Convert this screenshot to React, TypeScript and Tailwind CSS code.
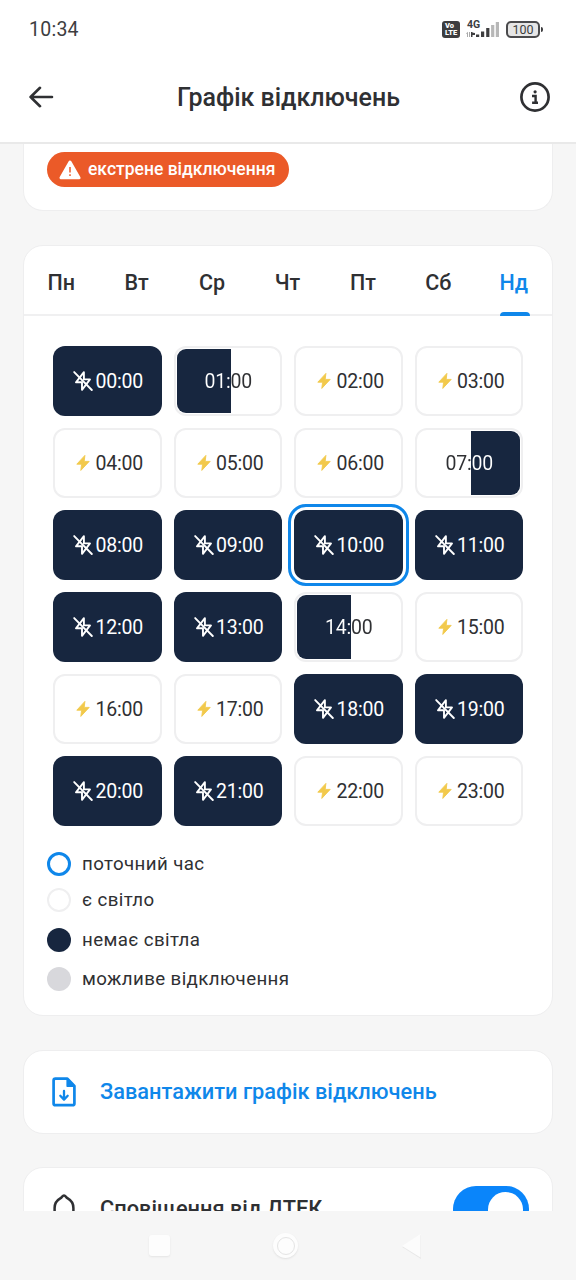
import React from "react";

type Kind = "on" | "off" | "offFirst" | "offSecond";

const KINDS: Kind[] = [
  "off", "offFirst", "on", "on",
  "on", "on", "on", "offSecond",
  "off", "off", "off", "off",
  "off", "off", "offFirst", "on",
  "on", "on", "off", "off",
  "off", "off", "on", "on",
];

const CURRENT_HOUR = 10;
const DAYS = ["Пн", "Вт", "Ср", "Чт", "Пт", "Сб", "Нд"];

function BoltIcon() {
  return (
    <svg viewBox="0 0 14 18" className="mr-[5px] h-[18px] w-[14px] shrink-0">
      <path d="M8.9 1.4 .8 10.2h4.8L4.8 16.4 13.2 7.4H8.2Z" fill="#f2c94c" stroke="#f2c94c" strokeWidth=".9" strokeLinejoin="round" />
    </svg>
  );
}

function BoltOffIcon() {
  return (
    <svg viewBox="0 0 20 20" className="mr-[2px] h-5 w-5 shrink-0" fill="none" stroke="#fff" strokeWidth="1.9" strokeLinejoin="round" strokeLinecap="round">
      <path d="M10.9 1.2 3 11.3h6L9 18.8 17 8.4h-6.1Z" />
      <path d="M1.2 1.1 18.8 19" />
    </svg>
  );
}

function Cell({ hour, kind }: { hour: number; kind: Kind }) {
  const label = `${String(hour).padStart(2, "0")}:00`;
  const text = "pt-px text-[19.5px] leading-[24px] tracking-[-0.2px]";
  if (kind === "off") {
    return (
      <div className={`flex h-[70px] items-center justify-center rounded-[12px] bg-[#17263f] pl-[2px] text-white ${hour === CURRENT_HOUR ? "outline-[3px] outline-offset-[3px] outline-[#0f87ea]" : ""}`}>
        <BoltOffIcon />
        <span className={text}>{label}</span>
      </div>
    );
  }
  if (kind === "on") {
    return (
      <div className="flex h-[70px] items-center justify-center rounded-[12px] border-2 border-[#efeff0] pl-[5px] text-[#2f3033]">
        <BoltIcon />
        <span className={text}>{label}</span>
      </div>
    );
  }
  const first = kind === "offFirst";
  return (
    <div className="grid h-[70px] rounded-[12px] border-2 border-[#efeff0]">
      <div
        className={
          first
            ? "col-start-1 row-start-1 mt-px mb-px ml-px w-[54px] rounded-l-[9px] bg-[#17263f]"
            : "col-start-1 row-start-1 mt-px mr-px mb-px w-[49px] justify-self-end rounded-r-[9px] bg-[#17263f]"
        }
      />
      <span
        className={`col-start-1 row-start-1 self-center bg-clip-text pl-px text-center text-transparent ${text} ${
          first
            ? "bg-[linear-gradient(90deg,#fff_55px,#2f3033_55px)]"
            : "bg-[linear-gradient(90deg,#2f3033_54.5px,#fff_54.5px)]"
        }`}
      >
        {label}
      </span>
    </div>
  );
}

function StatusBar() {
  return (
    <div className="flex h-[52px] items-center pt-[6px] pr-[33px] pl-[29px] text-[#3d3d3f]">
      <span className="pt-[2px] text-[19.5px] tracking-[0.25px]">10:34</span>
      <div className="ml-auto flex items-center">
        <div className="flex h-[17px] w-[18px] flex-col items-center justify-center rounded-[3px] bg-[#3d3d3f] text-[7.5px] leading-[7px] font-black text-white">
          <span className="self-start pl-[3px]">Vo</span>
          <span>LTE</span>
        </div>
        <div className="ml-[6px] flex h-[20px] w-[33px] flex-col">
          <span className="ml-[1px] h-[8px] text-[10.5px] leading-[11px] font-bold">4G</span>
          <svg viewBox="0 0 33 16" className="-mt-[6px] h-4 w-[33px] shrink-0">
            <path d="M0 12.5 2 10.8V16H1V13ZM3 11h1v5H3Z" fill="#aaa" />
            <path d="M5 11h1.5v5H5ZM6 11.5 9 12v2H6Z" fill="#3d3d3f" />
            <path d="M10 13.5h3.2V16H10ZM15 10.5h3.2V16H15ZM20.2 7h3.2v9h-3.2Z" fill="#3d3d3f" />
            <path d="M25.1 4h3.2v12h-3.2ZM29.8 1H33v15h-3.2Z" fill="#b7b7b7" />
          </svg>
        </div>
        <div className="ml-[7px] flex h-[17px] w-[34px] items-center justify-center rounded-[5px] border-2 border-[#4a4a4c] bg-[#e6e6e6] pt-px text-[12.5px] leading-[12px]">
          100
        </div>
        <div className="ml-px h-[5px] w-[2px] rounded-r bg-[#3d3d3f]" />
      </div>
    </div>
  );
}

function Header() {
  return (
    <header className="h-[144px] shrink-0 border-b-2 border-[#e9e9e9] bg-white">
      <StatusBar />
      <div className="flex h-[90px] items-center justify-between pr-[25px] pl-[28px]">
        <svg viewBox="0 0 27 22" className="h-[22px] w-[27px]" fill="none" stroke="#2f3033" strokeWidth="2.6" strokeLinecap="round" strokeLinejoin="round">
          <path d="M24 11H2.6M12 1.8 2.6 11 12 20.2" />
        </svg>
        <h1 className="pt-[2px] pl-[3px] text-[25px] leading-8 font-medium tracking-[-0.02px] whitespace-nowrap text-[#2f3033]">Графік відключень</h1>
        <svg viewBox="0 0 32 32" className="h-8 w-8" fill="none" stroke="#2f3033" strokeWidth="2.7">
          <circle cx="16" cy="16" r="13.6" />
          <path d="M13 15h3.6v7M13.1 21.8h5.9" strokeWidth="2.4" />
          <circle cx="16.1" cy="10.8" r="1.6" fill="#2f3033" stroke="none" />
        </svg>
      </div>
    </header>
  );
}

const card = "border border-[#eeeeef] bg-white";

export default function App() {
  return (
    <div className="flex h-[1280px] w-[576px] flex-col overflow-hidden bg-[#f6f6f6] font-[Roboto,sans-serif] text-[#2f3033]">
      <Header />
      <main className="min-h-0 flex-1 overflow-hidden px-[23px]">
        <section className={`h-[67px] rounded-b-[20px] px-[23px] pt-[8px] ${card} border-t-0`}>
          <div className="flex h-[35px] w-[242px] items-center rounded-full bg-[#eb5a28] pl-[12px] text-white">
            <svg viewBox="0 0 22 20" className="mr-[7px] h-[20px] w-[22px] shrink-0">
              <path d="M11 2 20 17.8H2Z" fill="#fff" stroke="#fff" strokeWidth="3" strokeLinejoin="round" />
              <path d="M11 7v5.5M11 14.2v1.8" stroke="#eb5a28" strokeWidth="1.5" />
            </svg>
            <span className="text-[17.5px] font-medium whitespace-nowrap">екстрене відключення</span>
          </div>
        </section>

        <section className={`mt-[34px] h-[771px] rounded-[20px] ${card}`}>
          <div className="grid h-[70px] grid-cols-7 border-b-2 border-[#f0f0f1]">
            {DAYS.map((d) => (
              <div key={d} className={`flex flex-col items-center pt-[23px] text-[21.5px] leading-[28px] font-medium ${d === "Нд" ? "text-[#0f87ea]" : ""}`}>
                <span className="pr-px">{d}</span>
                {d === "Нд" && <div className="mt-auto -mb-[2px] ml-px h-[4px] w-[30px] shrink-0 rounded-t-[4px] bg-[#0f87ea]" />}
              </div>
            ))}
          </div>
          <div className="mx-[29px] mt-[30px] grid grid-cols-4 gap-x-[12px] gap-y-[12px]">
            {KINDS.map((k, h) => (
              <Cell key={h} hour={h} kind={k} />
            ))}
          </div>
          <ul className="mt-[26px] ml-[22.5px] flex flex-col text-[18.7px] leading-6 tracking-[0.39px]">
            <li className="flex h-6 items-center gap-[11.5px]">
              <span className="h-6 w-6 rounded-full border-[3px] border-[#0f87ea]" />
              поточний час
            </li>
            <li className="mt-[12px] flex h-6 items-center gap-[11.5px]">
              <span className="h-6 w-6 rounded-full border-2 border-[#efeff0]" />
              є світло
            </li>
            <li className="mt-[16px] flex h-6 items-center gap-[11.5px]">
              <span className="h-6 w-6 rounded-full bg-[#17263f]" />
              немає світла
            </li>
            <li className="mt-[15px] flex h-6 items-center gap-[11.5px]">
              <span className="h-6 w-6 rounded-full bg-[#d8d8dc]" />
              можливе відключення
            </li>
          </ul>
        </section>

        <section className={`mt-[34px] flex h-[84px] items-center rounded-[20px] pl-[28px] text-[#0f87ea] ${card}`}>
          <svg viewBox="0 0 24 30" className="mr-[24px] h-[30px] w-[24px]" fill="none" stroke="#0f87ea" strokeWidth="2.7" strokeLinejoin="round" strokeLinecap="round">
            <path d="M3.4 1.6h12l7 7.3v17.5a1.8 1.8 0 0 1-1.8 1.8H3.4a1.8 1.8 0 0 1-1.8-1.8V3.4a1.8 1.8 0 0 1 1.8-1.8Z" />
            <path d="M15.2 2v7.2h7.2Z" fill="#0f87ea" strokeWidth="1.6" />
            <path d="M12 14v8.4M8.3 18.8l3.7 3.8 3.7-3.8" strokeWidth="2.3" />
          </svg>
          <span className="text-[21.8px] font-medium whitespace-nowrap">Завантажити графік відключень</span>
        </section>

        <section className={`mt-[33px] flex h-[84px] items-center rounded-[20px] pr-[23px] pl-[28px] ${card}`}>
          <svg viewBox="0 0 24 30" className="mr-[24px] h-[30px] w-[24px] shrink-0" fill="none" stroke="#2f3033" strokeWidth="2.5" strokeLinejoin="round" strokeLinecap="round">
            <path d="M12 1.6c-1.5 0-1.9 1.5-3.4 2.6C5 6.2 2.6 9.5 2.6 14v5L1 22.6h22L21.4 19v-5c0-4.5-2.4-7.8-6-9.8C13.9 3.1 13.5 1.6 12 1.6ZM9 26.5a3 3 0 0 0 6 0" />
          </svg>
          <span className="text-[21.8px] font-medium whitespace-nowrap">Сповіщення від ДТЕК</span>
          <div className="ml-auto flex h-[46px] w-[76px] items-center justify-end rounded-full bg-[#0a85fa] pr-[6px]">
            <div className="h-[35px] w-[35px] rounded-full bg-white" />
          </div>
        </section>
      </main>
      <nav className="flex h-[69px] shrink-0 items-center pl-[149px]">
        <div className="h-[21px] w-[21px] rounded-[3px] bg-[#fdfdfd] shadow-[0_1px_2px_#e4e4e4]" />
        <div className="ml-[103px] flex h-[25px] w-[25px] items-center justify-center rounded-full bg-[#fdfdfd] shadow-[0_1px_2px_#e0e0e0]">
          <div className="h-[18px] w-[18px] rounded-full border border-[#e4e4e4] bg-[#fdfdfd]" />
        </div>
        <svg viewBox="0 0 24 30" className="ml-[102px] h-[30px] w-6">
          <path d="M21 4v24L2 16Z" fill="#e8e8e8" />
          <path d="M20.5 3v23.5L2 15Z" fill="#fcfcfc" />
        </svg>
      </nav>
    </div>
  );
}
